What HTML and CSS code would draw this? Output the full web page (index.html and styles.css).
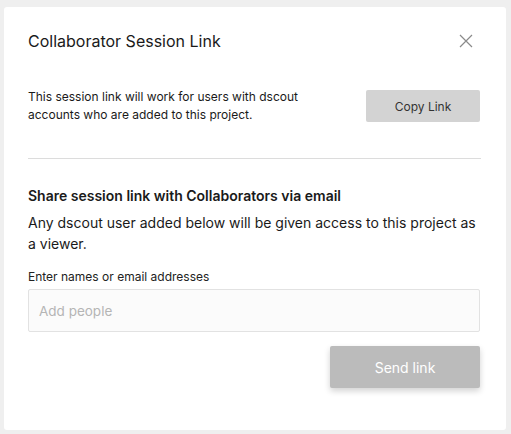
FILE: index.html
```html
<!DOCTYPE html>
<html>
<head>
<meta charset="utf-8">
<link rel="stylesheet" href="styles.css">
</head>
<body>
<div class="modal">
  <div class="header">
    <h1 class="title">Collaborator Session Link</h1>
    <button class="close" aria-label="Close">
      <svg width="14" height="14" viewBox="0 0 14 14"><path d="M1 1L13 13M13 1L1 13" stroke="#8a8a8a" stroke-width="1.2" fill="none"/></svg>
    </button>
  </div>
  <div class="link-row">
    <p class="link-text">This session link will work for users with dscout accounts who are added to this project.</p>
    <button class="copy-btn">Copy Link</button>
  </div>
  <hr class="divider">
  <h2 class="share-title">Share session link with Collaborators via email</h2>
  <p class="share-text">Any dscout user added below will be given access to this project as a viewer.</p>
  <label class="field-label">Enter names or email addresses</label>
  <div class="input">Add people</div>
  <div class="actions">
    <button class="send-btn">Send link</button>
  </div>
</div>
</body>
</html>
```
FILE: styles.css
```css
* { box-sizing: border-box; }
html, body { margin: 0; padding: 0; }
body {
  background: #efefef;
  font-family: Inter, "Liberation Sans", sans-serif;
  color: #1a1a1a;
  width: 511px;
  height: 434px;
  overflow: hidden;
}
.modal {
  margin: 7px 0 0 4px;
  width: 502px;
  height: 423px;
  background: #fff;
  border-radius: 3px;
  padding: 0 25px 0 24px;
}
.header {
  display: flex;
  justify-content: space-between;
  align-items: center;
  height: 68px;
}
.title {
  margin: 0;
  font-size: 16px;
  font-weight: 400;
  color: #1a1a1a;
}
.close {
  border: 0;
  background: none;
  padding: 0;
  margin-right: 8px;
  width: 14px;
  height: 14px;
  display: flex;
}
.link-row {
  display: flex;
  justify-content: space-between;
  align-items: center;
  margin-top: 13px;
}
.link-text {
  margin: 0;
  font-size: 12px;
  line-height: 18px;
  width: 290px;
  color: #1a1a1a;
}
.copy-btn {
  width: 114px;
  height: 32px;
  background: #d3d3d3;
  border: 0;
  border-radius: 2px;
  font-family: inherit;
  font-size: 12px;
  color: #333;
  margin-right: 1px;
}
.divider {
  border: 0;
  border-top: 1px solid #dcdcdc;
  margin: 34px 0 0 0;
}
.share-title {
  margin: 27px 0 0 0;
  font-size: 14px;
  font-weight: 600;
  line-height: 20px;
}
.share-text {
  margin: 6px 0 0 0;
  font-size: 14px;
  line-height: 21px;
  color: #1a1a1a;
}
.field-label {
  display: block;
  margin-top: 15px;
  font-size: 12px;
  line-height: 16px;
  color: #222;
}
.input {
  margin-top: 4px;
  height: 43px;
  border: 1px solid #e2e2e2;
  border-radius: 2px;
  background: #fbfbfb;
  padding: 0 10px;
  display: flex;
  align-items: center;
  font-size: 13.5px;
  color: #b5b5b5;
  margin-right: 1px;
}
.actions {
  display: flex;
  justify-content: flex-end;
  margin-top: 14px;
  margin-right: 1px;
}
.send-btn {
  width: 150px;
  height: 42px;
  background: #bbbbbb;
  border: 0;
  border-radius: 2px;
  font-family: inherit;
  font-size: 14px;
  color: #fff;
  box-shadow: 0 3px 6px rgba(0,0,0,0.18);
}
```
